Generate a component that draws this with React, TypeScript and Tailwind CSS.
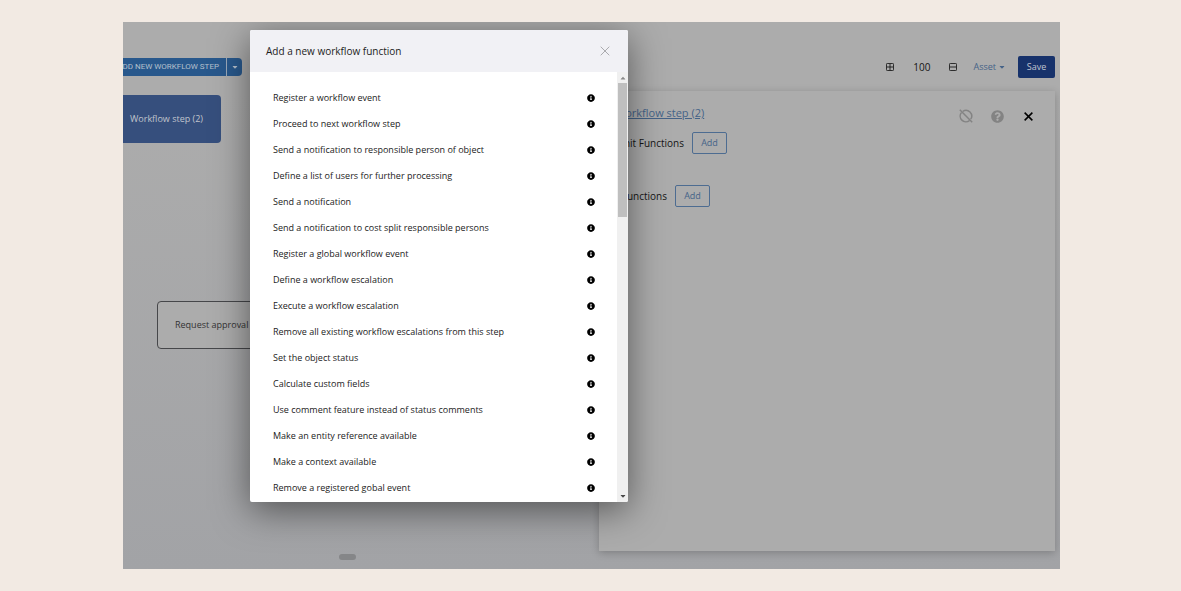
import { FaInfoCircle, FaQuestionCircle, FaCaretDown, FaCaretUp } from 'react-icons/fa'

const FUNCTIONS = [
  'Register a workflow event',
  'Proceed to next workflow step',
  'Send a notification to responsible person of object',
  'Define a list of users for further processing',
  'Send a notification',
  'Send a notification to cost split responsible persons',
  'Register a global workflow event',
  'Define a workflow escalation',
  'Execute a workflow escalation',
  'Remove all existing workflow escalations from this step',
  'Set the object status',
  'Calculate custom fields',
  'Use comment feature instead of status comments',
  'Make an entity reference available',
  'Make a context available',
  'Remove a registered gobal event',
]

function CloseIcon({ size = 10, width = 1 }: { size?: number; width?: number }) {
  return (
    <svg width={size} height={size} viewBox="0 0 10 10" fill="none" stroke="currentColor" strokeWidth={width}>
      <path d="M0.7 0.7L9.3 9.3M9.3 0.7L0.7 9.3" />
    </svg>
  )
}

function BoxIcon({ plus = false }: { plus?: boolean }) {
  return (
    <svg width="8" height="8" viewBox="0 0 9 9" fill="none" stroke="currentColor">
      <rect x="0.5" y="0.5" width="8" height="8" rx="1" />
      <path d={plus ? 'M1 4.5H8M4.5 1V8' : 'M1 4.5H8'} />
    </svg>
  )
}

function DisabledIcon() {
  return (
    <svg width="14" height="14" viewBox="0 0 14 14" fill="none" stroke="currentColor" strokeWidth="1.5">
      <path d="M3.8 2.3A5.7 5.7 0 0 1 11.7 10.2M10.4 11.6A5.7 5.7 0 0 1 2.4 3.6M0.8 0.8L13.2 13.2" />
    </svg>
  )
}

function Toolbar() {
  return (
    <header className="flex h-[69px] items-center justify-between pt-[21px] pr-[5px]">
      <div className="-ml-2 flex h-[18px] rounded-r-sm bg-[#28588c] text-[#b5c0cd]">
        <button className="flex w-28 items-center justify-end border-r border-[#9aa9ba] pr-[7px] font-['Roboto',sans-serif] text-[8px] whitespace-nowrap">
          ADD NEW WORKFLOW STEP
        </button>
        <button aria-label="More step types" className="flex w-[15px] items-center justify-center">
          <FaCaretDown size={8} />
        </button>
      </div>
      <div className="flex items-center text-[10px] text-[#151515]">
        <button aria-label="Zoom in"><BoxIcon plus /></button>
        <span className="mx-[19px]">100</span>
        <button aria-label="Zoom out"><BoxIcon /></button>
        <button className="mr-3 ml-4 flex items-center gap-0.5 text-[9px] text-[#456388]">
          Asset <FaCaretDown size={8} />
        </button>
        <button className="h-[22px] w-[37px] rounded-xs bg-[#17326b] text-[9px] text-[#c0c5d0]">Save</button>
      </div>
    </header>
  )
}

function AddButton() {
  return (
    <button className="h-[22px] w-[35px] rounded-xs border border-[#4d6c91] text-[9px] text-[#456388]">Add</button>
  )
}

function StepPanel() {
  return (
    <aside className="relative mr-[5px] mb-[18px] w-[456px] shrink-0 bg-[#acacac] pt-3.5 pl-4 shadow-[0_2px_8px_rgba(0,0,0,0.22)]">
      <div className="flex items-start justify-between pr-5">
        <a href="#step" className="text-[11px] leading-4 text-[#456388] underline">Workflow step (2)</a>
        <div className="flex items-center gap-[18px] pt-1 text-[#838383]">
          <button aria-label="Disable"><DisabledIcon /></button>
          <button aria-label="Help"><FaQuestionCircle size={13} /></button>
          <button aria-label="Close panel" className="flex w-[13px] justify-center text-black">
            <CloseIcon size={9} width={1.7} />
          </button>
        </div>
      </div>
      <div className="mt-[9px] flex items-center gap-2 text-[10px] text-[#151515]">
        <span className="w-[69px] text-right">Init Functions</span>
        <AddButton />
      </div>
      <div className="mt-[31px] flex items-center gap-2 text-[10px] text-[#151515]">
        <span className="w-[52px] text-right">Functions</span>
        <AddButton />
      </div>
    </aside>
  )
}

function FunctionDialog() {
  return (
    <div
      role="dialog"
      aria-labelledby="dialog-title"
      className="absolute top-2 bottom-[67px] left-[127px] flex w-[378px] flex-col overflow-hidden rounded-xs bg-white shadow-[0_8px_36px_rgba(0,0,0,0.5)]"
    >
      <div className="flex h-[42px] shrink-0 items-center justify-between bg-[#f1f1f5] pr-[18px] pl-4">
        <h2 id="dialog-title" className="text-[10px] text-[#1c1c1c]">Add a new workflow function</h2>
        <button aria-label="Close" className="text-[#aaaaae]"><CloseIcon /></button>
      </div>
      <div className="flex min-h-0 flex-1">
        <ul className="flex-1 overflow-hidden pt-[13px] pr-[22px] pl-[23px]">
          {FUNCTIONS.map((name) => (
            <li key={name} className="flex h-[26px] items-center justify-between text-[9px] text-[#222222]">
              {name}
              <button aria-label={`About: ${name}`} className="text-black"><FaInfoCircle size={8} /></button>
            </li>
          ))}
        </ul>
        <div className="flex w-[11px] flex-col items-center bg-[#f0f0f0]">
          <FaCaretUp size={8} className="mt-0.5 shrink-0 text-[#8a8a8a]" />
          <div className="mt-px h-[134px] w-[9px] bg-[#bfbfbf]" />
          <FaCaretDown size={8} className="mt-auto mb-0.5 text-[#4a4a4a]" />
        </div>
      </div>
    </div>
  )
}

export default function App() {
  return (
    <div className="flex min-h-screen bg-[#f2eae3] pt-[22px] pr-[121px] pb-[22px] pl-[123px] font-['Open_Sans',sans-serif]">
      <div className="relative flex min-w-0 flex-1 flex-col overflow-hidden bg-[#acacac]">
        <Toolbar />
        <main className="flex flex-1 bg-linear-to-b from-[#acacac] to-[#a2a3a6]">
          <div className="relative flex-1 text-[9px]">
            <div className="absolute top-1 -left-2 flex h-12 w-[106px] items-center justify-end rounded-sm bg-[#364f7d] pr-[18px] text-[#c0c4cc]">
              Workflow step (2)
            </div>
            <div className="absolute top-[210px] left-[34px] flex h-12 w-28 items-center rounded-sm border border-[#46474a] bg-[#acacac] pl-[17px] text-[#333333]">
              Request approval
            </div>
            <div className="absolute bottom-[9px] left-[216px] h-1.5 w-[17px] rounded-full bg-[#858688]" />
          </div>
          <StepPanel />
        </main>
        <FunctionDialog />
      </div>
    </div>
  )
}
